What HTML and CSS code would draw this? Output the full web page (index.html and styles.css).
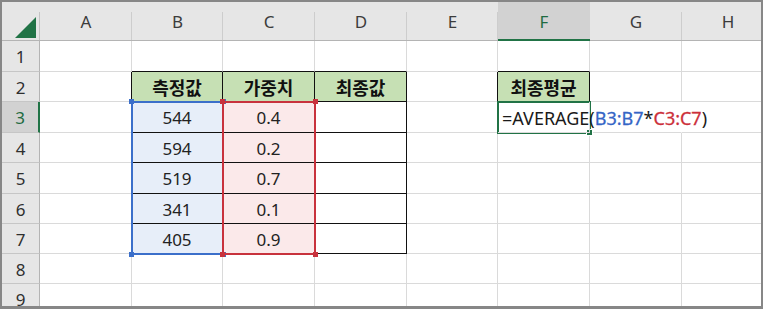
FILE: index.html
```html
<!DOCTYPE html>
<html lang="ko">
<head>
<meta charset="utf-8">
<title>Sheet</title>
<link rel="stylesheet" href="styles.css">
</head>
<body>
<div class="frame">
  <div class="sheet">
    <div class="row r0">
      <div class="corner"><svg class="tri" width="37" height="38" viewBox="0 0 37 38"><polygon points="13,36 34,15 34,36" fill="#217346"/></svg></div>
      <div class="ch">A</div>
      <div class="ch">B</div>
      <div class="ch">C</div>
      <div class="ch">D</div>
      <div class="ch">E</div>
      <div class="ch sel">F</div>
      <div class="ch">G</div>
      <div class="ch">H</div>
    </div>

    <div class="row r1">
      <div class="rh">1</div>
      <div class="c"></div>
      <div class="c tt"></div>
      <div class="c tt"></div>
      <div class="c tt"></div>
      <div class="c"></div>
      <div class="c tt"></div>
      <div class="c"></div>
      <div class="c"></div>
    </div>

    <div class="row r2">
      <div class="rh">2</div>
      <div class="c lb"></div>
      <div class="c hd">측정값</div>
      <div class="c hd">가중치</div>
      <div class="c hd">최종값</div>
      <div class="c lb"></div>
      <div class="c hd">최종평균</div>
      <div class="c"></div>
      <div class="c"></div>
    </div>

    <div class="row r3">
      <div class="rh sel">3</div>
      <div class="c lb"></div>
      <div class="c tb bl">544</div>
      <div class="c tb rd">0.4</div>
      <div class="c tb"></div>
      <div class="c"></div>
      <div class="c fx"><span>=AVERAGE(</span><span class="rb">B3:B7</span><span>*</span><span class="rr">C3:C7</span><span>)</span></div>
      <div class="c ovr"></div>
      <div class="c"></div>
    </div>

    <div class="row r4">
      <div class="rh">4</div>
      <div class="c lb"></div>
      <div class="c tb bl">594</div>
      <div class="c tb rd">0.2</div>
      <div class="c tb"></div>
      <div class="c"></div>
      <div class="c"></div>
      <div class="c"></div>
      <div class="c"></div>
    </div>

    <div class="row r5">
      <div class="rh">5</div>
      <div class="c lb"></div>
      <div class="c tb bl">519</div>
      <div class="c tb rd">0.7</div>
      <div class="c tb"></div>
      <div class="c"></div>
      <div class="c"></div>
      <div class="c"></div>
      <div class="c"></div>
    </div>

    <div class="row r6">
      <div class="rh">6</div>
      <div class="c lb"></div>
      <div class="c tb bl">341</div>
      <div class="c tb rd">0.1</div>
      <div class="c tb"></div>
      <div class="c"></div>
      <div class="c"></div>
      <div class="c"></div>
      <div class="c"></div>
    </div>

    <div class="row r7">
      <div class="rh">7</div>
      <div class="c lb"></div>
      <div class="c tb bl">405</div>
      <div class="c tb rd">0.9</div>
      <div class="c tb"></div>
      <div class="c"></div>
      <div class="c"></div>
      <div class="c"></div>
      <div class="c"></div>
    </div>

    <div class="row r8">
      <div class="rh">8</div>
      <div class="c"></div>
      <div class="c"></div>
      <div class="c"></div>
      <div class="c"></div>
      <div class="c"></div>
      <div class="c"></div>
      <div class="c"></div>
      <div class="c"></div>
    </div>

    <div class="row r9">
      <div class="rh">9</div>
      <div class="c"></div>
      <div class="c"></div>
      <div class="c"></div>
      <div class="c"></div>
      <div class="c"></div>
      <div class="c"></div>
      <div class="c"></div>
      <div class="c"></div>
    </div>

    <div class="rng blue"><i class="q1"></i><i class="q2"></i><i class="q3"></i><i class="q4"></i></div>
    <div class="rng red"><i class="q1"></i><i class="q2"></i><i class="q3"></i><i class="q4"></i></div>
    <div class="act"><i class="fill"></i></div>
  </div>
</div>
</body>
</html>
```

FILE: styles.css
```css
html, body {
  margin: 0;
  padding: 0;
  background: #ffffff;
}

.frame {
  width: 763px;
  height: 309px;
  box-sizing: border-box;
  border: 2px solid #878787;
  border-bottom-width: 3px;
  overflow: hidden;
  background: #ffffff;
}

.sheet {
  display: grid;
  grid-template-columns: 38px 92px 91px 92px 92px 91px 92px 92px 92px;
  grid-template-rows: 39px 31px 30px 31px 30px 31px 30px 30px 30px 30px;
  font-family: "Noto Sans", "Noto Sans CJK KR", sans-serif;
  font-size: 17px;
  color: #222222;
}

.row {
  display: contents;
}

.r0 > * { grid-row: 1; }
.r1 > * { grid-row: 2; }
.r2 > * { grid-row: 3; }
.r3 > * { grid-row: 4; }
.r4 > * { grid-row: 5; }
.r5 > * { grid-row: 6; }
.r6 > * { grid-row: 7; }
.r7 > * { grid-row: 8; }
.r8 > * { grid-row: 9; }
.r9 > * { grid-row: 10; }

.row > :nth-child(1) { grid-column: 1; }
.row > :nth-child(2) { grid-column: 2; }
.row > :nth-child(3) { grid-column: 3; }
.row > :nth-child(4) { grid-column: 4; }
.row > :nth-child(5) { grid-column: 5; }
.row > :nth-child(6) { grid-column: 6; }
.row > :nth-child(7) { grid-column: 7; }
.row > :nth-child(8) { grid-column: 8; }
.row > :nth-child(9) { grid-column: 9; }

.corner {
  border-bottom: 1px solid #b4b4b4;
  background: linear-gradient(#c4c4c4, #c4c4c4) right bottom / 1px calc(100% - 10px) no-repeat, #e6e6e6;
}

.tri {
  display: block;
}

.ch {
  display: flex;
  align-items: center;
  justify-content: center;
  padding-top: 1px;
  border-bottom: 1px solid #b4b4b4;
  background: linear-gradient(#cdcdcd, #cdcdcd) right bottom / 1px calc(100% - 10px) no-repeat, #e6e6e6;
  color: #3c3c3c;
}

.ch.sel {
  background: #d2d2d2;
  border-bottom: 2px solid #217346;
  color: #1e6b41;
}

.rh {
  display: flex;
  align-items: center;
  justify-content: center;
  padding-top: 1px;
  border-right: 1px solid #b4b4b4;
  border-bottom: 1px solid #c6c6c6;
  background: #e6e6e6;
  color: #2f2f2f;
}

.rh.sel {
  background: #d2d2d2;
  border-right: 2px solid #217346;
  color: #1e6b41;
}

.c {
  display: flex;
  align-items: center;
  justify-content: center;
  padding-top: 1px;
  border-right: 1px solid #dadada;
  border-bottom: 1px solid #dadada;
  white-space: nowrap;
}

.tt {
  border-bottom-color: #111111;
}

.lb {
  border-right-color: #111111;
}

.hd,
.tb {
  border-right-color: #111111;
  border-bottom-color: #111111;
}

.hd {
  background: #c6e0b4;
  font-family: "Noto Sans CJK KR", sans-serif;
  font-weight: 700;
  font-size: 18px;
  color: #111111;
}

.bl {
  background: #e7eef9;
}

.rd {
  background: #fbe9ea;
}

.fx {
  justify-content: flex-start;
  padding-left: 4px;
  font-size: 18px;
  color: #1a1a1a;
  position: relative;
  z-index: 4;
}

.rb {
  color: #3565c6;
  -webkit-text-stroke: 0.3px #3565c6;
}

.rr {
  color: #cc2f3a;
  -webkit-text-stroke: 0.3px #cc2f3a;
}

.ovr {
  border-right-color: transparent;
}

.rng {
  grid-row: 4 / 9;
  margin: -1px;
  border: 2px solid;
  position: relative;
  z-index: 2;
  pointer-events: none;
}

.rng.blue {
  grid-column: 3;
  border-color: #3b6fca;
}

.rng.red {
  grid-column: 4;
  border-color: #c8323d;
}

.rng i {
  position: absolute;
  width: 5px;
  height: 5px;
}

.rng.blue i {
  background: #3b6fca;
}

.rng.red i {
  background: #c8323d;
}

.q1 { left: -4px; top: -4px; }
.q2 { right: -4px; top: -4px; }
.q3 { left: -4px; bottom: -4px; }
.q4 { right: -4px; bottom: -4px; }

.act {
  grid-column: 7;
  grid-row: 4;
  margin: -1px;
  border: 2px solid #217346;
  position: relative;
  z-index: 3;
  pointer-events: none;
}

.fill {
  position: absolute;
  right: -3px;
  bottom: -3px;
  width: 5px;
  height: 5px;
  background: #217346;
  outline: 1px solid #ffffff;
}
```
